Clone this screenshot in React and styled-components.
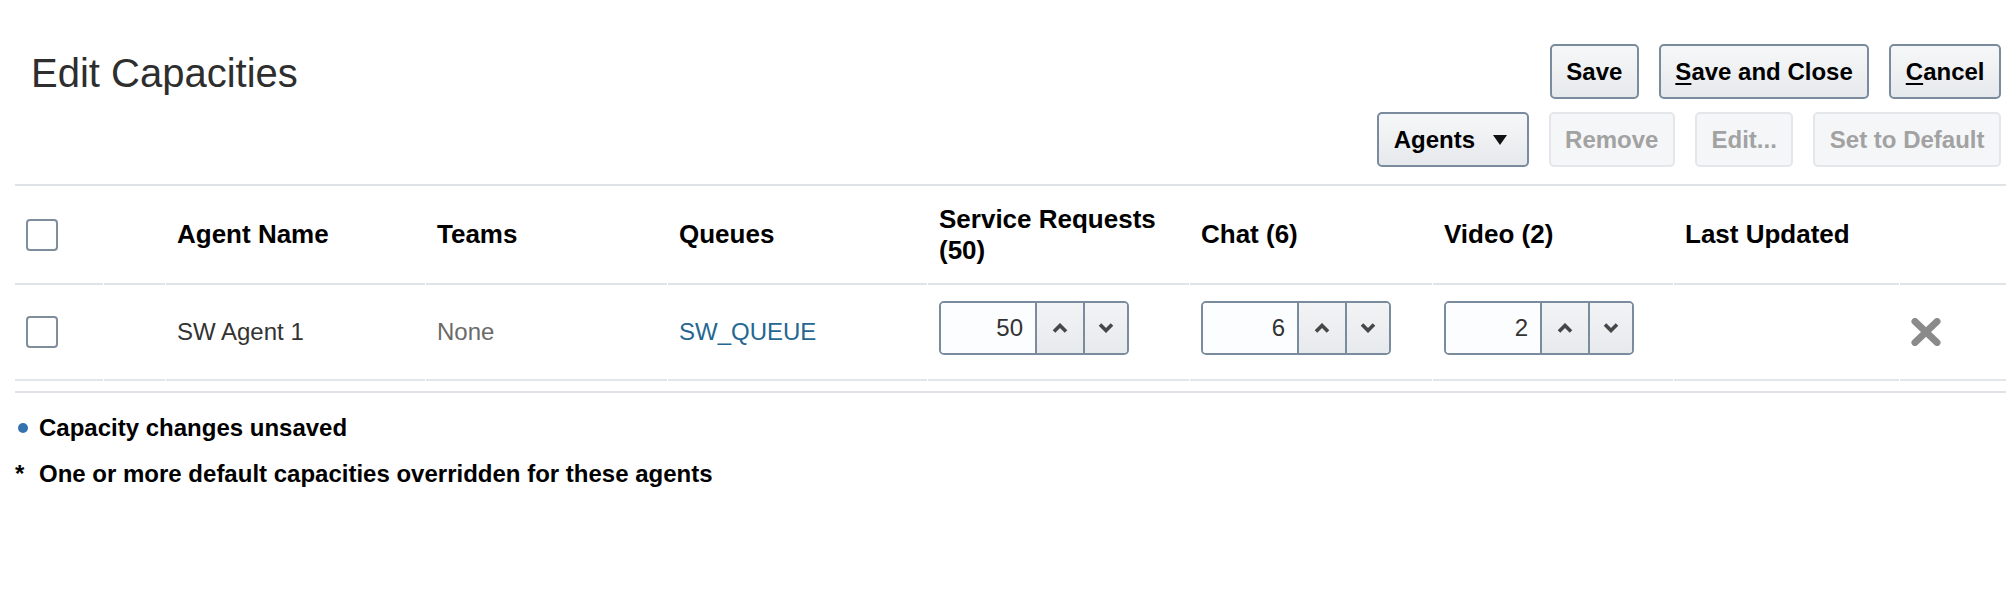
import React from "react"
import styled, { createGlobalStyle } from "styled-components"

const GlobalStyle = createGlobalStyle`
    body {
        margin: 0;
        background: #fff;
        font-family: "Liberation Sans", Arial, Helvetica, sans-serif;
    }
`

const ChevronUp = () => (
    <svg width="16" height="10" viewBox="0 0 16 10">
        <polyline points="2,8.5 8,2.5 14,8.5" fill="none" stroke="#474747" strokeWidth="3.6" />
    </svg>
)

const ChevronDown = () => (
    <svg width="16" height="10" viewBox="0 0 16 10">
        <polyline points="2,1.5 8,7.5 14,1.5" fill="none" stroke="#474747" strokeWidth="3.6" />
    </svg>
)

const DeleteIcon = () => (
    <svg width="30" height="28" viewBox="0 0 30 28">
        <path d="M4 3.5 L26 24.5 M26 3.5 L4 24.5" stroke="#8a8a8a" strokeWidth="7" strokeLinecap="round" />
    </svg>
)

const rows = [
    { name: "SW Agent 1", teams: "None", queue: "SW_QUEUE", sr: 50, chat: 6, video: 2 },
]

const Spinner = ({ value }) => (
    <SpinBox>
        <SpinValue>{value}</SpinValue>
        <SpinButton><ChevronUp /></SpinButton>
        <SpinButton narrow><ChevronDown /></SpinButton>
    </SpinBox>
)

const App = () => {
    return (
        <Page>
            <GlobalStyle />
            <Header>
                <Title>Edit Capacities</Title>
                <Toolbar>
                    <ButtonRow>
                        <Button>Save</Button>
                        <Button><u>S</u>ave and Close</Button>
                        <Button><u>C</u>ancel</Button>
                    </ButtonRow>
                    <ButtonRow>
                        <Button>
                            Agents
                            <Caret />
                        </Button>
                        <Button disabled>Remove</Button>
                        <Button disabled>Edit...</Button>
                        <Button disabled>Set to Default</Button>
                    </ButtonRow>
                </Toolbar>
            </Header>

            <Table>
                <HeadCell><Check /></HeadCell>
                <HeadCell />
                <HeadCell>Agent Name</HeadCell>
                <HeadCell>Teams</HeadCell>
                <HeadCell>Queues</HeadCell>
                <HeadCell>Service Requests (50)</HeadCell>
                <HeadCell>Chat (6)</HeadCell>
                <HeadCell>Video (2)</HeadCell>
                <HeadCell>Last Updated</HeadCell>
                <HeadCell />

                {rows.map((r) => (
                    <React.Fragment key={r.name}>
                        <Cell><Check /></Cell>
                        <Cell />
                        <Cell>{r.name}</Cell>
                        <Cell muted>{r.teams}</Cell>
                        <Cell><QueueLink>{r.queue}</QueueLink></Cell>
                        <Cell><Spinner value={r.sr} /></Cell>
                        <Cell><Spinner value={r.chat} /></Cell>
                        <Cell><Spinner value={r.video} /></Cell>
                        <Cell />
                        <Cell><DeleteIcon /></Cell>
                    </React.Fragment>
                ))}
            </Table>

            <Legend>
                <LegendItem>
                    <Marker><Dot /></Marker>
                    Capacity changes unsaved
                </LegendItem>
                <LegendItem>
                    <Marker>*</Marker>
                    One or more default capacities overridden for these agents
                </LegendItem>
            </Legend>
        </Page>
    )
}

const Page = styled.div`
    padding-left: 15px;
    color: #333;
`
const Header = styled.div`
    display: flex;
    justify-content: space-between;
    align-items: flex-start;
    padding: 44px 5px 17px 0;
    border-bottom: 2px solid #dfe3e7;
`
const Title = styled.h1`
    margin: 9px 0 0 16px;
    font-size: 40px;
    line-height: 40px;
    font-weight: 400;
    color: #2e2e2e;
`
const Toolbar = styled.div`
    display: flex;
    flex-direction: column;
    align-items: flex-end;
    gap: 13px;
`
const ButtonRow = styled.div`
    display: flex;
    gap: 20px;
`
const Button = styled.button`
    display: flex;
    align-items: center;
    height: 55px;
    padding: 0 14.5px;
    border-radius: 5px;
    font-family: inherit;
    font-size: 24px;
    font-weight: 700;
    border: 2px solid ${(p) => (p.disabled ? "#e3e7ea" : "#7a8b9d")};
    color: ${(p) => (p.disabled ? "#a2a2a2" : "#000")};
    background: ${(p) => (p.disabled ? "#f4f6f8" : "linear-gradient(#f6f7f8, #e6e9ec)")};
    u {
        text-decoration-thickness: 2px;
        text-underline-offset: 3px;
    }
`
const Caret = styled.span`
    margin: 0 5px 0 18px;
    width: 0;
    height: 0;
    border-left: 7px solid transparent;
    border-right: 7px solid transparent;
    border-top: 10px solid #111;
`
const Table = styled.div`
    display: grid;
    grid-template-columns: 88px 61px 259px 241px 259px 261px 242px 240px 225px 1fr;
    column-gap: 1px;
`
const HeadCell = styled.div`
    display: flex;
    align-items: center;
    height: 97px;
    padding: 0 11px;
    border-bottom: 2px solid #dfe3e7;
    font-size: 26px;
    line-height: 31px;
    font-weight: 700;
    color: #000;
`
const Cell = styled.div`
    display: flex;
    align-items: center;
    height: 94px;
    padding: 0 11px;
    border-bottom: 2px solid #e3e6e9;
    font-size: 24px;
    color: ${(p) => (p.muted ? "#6a6a6a" : "#333")};
`
const Check = styled.span`
    display: block;
    width: 28px;
    height: 28px;
    border: 2px solid #7f8e9d;
    border-radius: 4px;
    background: #fff;
`
const QueueLink = styled.a`
    color: #256791;
    text-decoration: none;
`
const SpinBox = styled.div`
    display: flex;
    width: 186px;
    height: 50px;
    margin-bottom: 8px;
    border: 2px solid #7a8b9d;
    border-radius: 5px;
    overflow: hidden;
`
const SpinValue = styled.div`
    flex: 0 0 94px;
    display: flex;
    align-items: center;
    justify-content: flex-end;
    padding-right: 12px;
    box-sizing: border-box;
    background: #fcfdfe;
    font-size: 24px;
    color: #333;
`
const SpinButton = styled.div`
    flex: 1;
    display: flex;
    align-items: center;
    justify-content: center;
    border-left: 2px solid #7a8b9d;
    background: linear-gradient(#f2f3f5, #e7eaed);
    max-width: ${(p) => (p.narrow ? "42px" : "46px")};
`
const Legend = styled.div`
    margin-top: 10px;
    padding-top: 12px;
    border-top: 2px solid #dfe3e7;
`
const LegendItem = styled.div`
    display: flex;
    align-items: center;
    font-size: 24px;
    line-height: 46px;
    font-weight: 700;
    color: #000;
`
const Marker = styled.span`
    width: 24px;
    display: flex;
    align-items: center;
`
const Dot = styled.span`
    width: 10px;
    height: 10px;
    margin-left: 3px;
    border-radius: 50%;
    background: #3572b0;
`

export default App
